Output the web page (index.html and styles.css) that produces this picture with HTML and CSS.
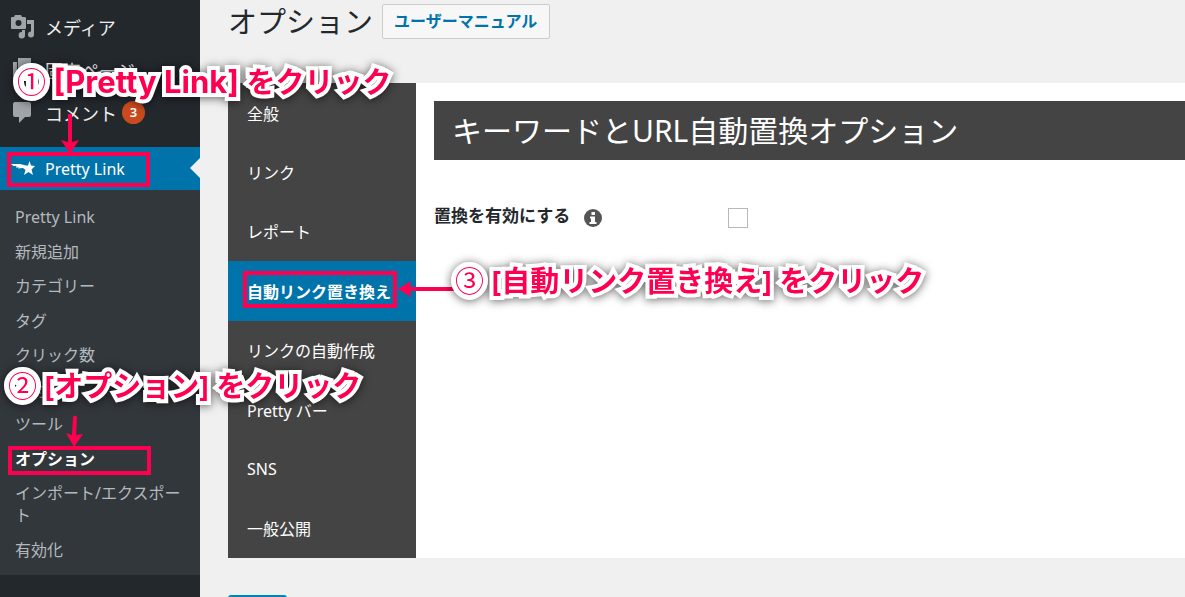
FILE: index.html
```html
<!DOCTYPE html>
<html lang="ja">
<head>
  <meta charset="UTF-8">
  <title>オプション</title>
  <link rel="stylesheet" href="styles.css">
</head>
<body>
  <div class="layout">
    <nav class="sidebar">
      <ul class="menu">
        <li>
          <a href="#">
            <svg class="icon" viewBox="0 0 24 24">
              <path fill-rule="evenodd" d="M0 3q0-1 1-1h2l1-2h6l1 2h2q2 0 2 1v10q0 1-1 1H1q-1 0-1-1zM7.500 5a3 3 0 1 0 0 6a3 3 0 1 0 0-6z"/>
              <path d="M16 5h7v14.500a3 3 0 1 1-3-3V9h-4z"/>
              <path d="M11 15h3v5a3.200 3.200 0 1 1-3-3z"/>
            </svg>
            メディア
          </a>
        </li>
        <li>
          <a href="#">
            <svg class="icon" viewBox="0 0 24 24">
              <path d="M7 0h13v17H7z"/>
              <path d="M2 4h4v14h11v3H2z"/>
            </svg>
            固定ページ
          </a>
        </li>
        <li>
          <a href="#">
            <svg class="icon" viewBox="0 0 24 24">
              <path d="M4 1h14q2 0 2 2v11q0 2-2 2h-4l-6 6v-6H4q-2 0-2-2V3q0-2 2-2z"/>
            </svg>
            コメント
            <span class="count">3</span>
          </a>
        </li>
        <li class="current">
          <a href="#">
            <svg class="icon" viewBox="0 0 24 24">
              <path d="M0 7h9l6 1.500h2L18.500 4l1.500 4.500 4 .500-3.500 3.500 1.500 5.500-4.500-3-4.500 3 1.500-5-2.500-2-5 .500 1-1H5l.500-1.500H2.500z"/>
            </svg>
            Pretty Link
          </a>
        </li>
      </ul>
      <ul class="submenu">
        <li><a href="#">Pretty Link</a></li>
        <li><a href="#">新規追加</a></li>
        <li><a href="#">カテゴリー</a></li>
        <li><a href="#">タグ</a></li>
        <li><a href="#">クリック数</a></li>
        <li><a href="#">寄付</a></li>
        <li><a href="#">ツール</a></li>
        <li class="selected"><a href="#">オプション</a></li>
        <li><a href="#">インポート/エクスポート</a></li>
        <li><a href="#">有効化</a></li>
      </ul>
    </nav>

    <main class="content">
      <header class="page-header">
        <h1>オプション</h1>
        <a class="manual" href="#">ユーザーマニュアル</a>
      </header>

      <div class="options">
        <ul class="tabs">
          <li><a href="#">全般</a></li>
          <li><a href="#">リンク</a></li>
          <li><a href="#">レポート</a></li>
          <li class="active"><a href="#">自動リンク置き換え</a></li>
          <li><a href="#">リンクの自動作成</a></li>
          <li><a href="#">Pretty バー</a></li>
          <li><a href="#">SNS</a></li>
          <li><a href="#">一般公開</a></li>
        </ul>
        <section class="panel">
          <h2>キーワードとURL自動置換オプション</h2>
          <div class="field">
            <div class="field-name">
              <label for="replace">置換を有効にする</label>
              <svg class="info" viewBox="0 0 18 18">
                <circle cx="9" cy="9" r="9"/>
                <path d="M7.500 3h3.500v3H7.500zM6 7.500h5v5.500h1.500v2H5.500v-2H7V9.500H6z"/>
              </svg>
            </div>
            <input type="checkbox" id="replace">
          </div>
        </section>
      </div>

      <button class="save" type="submit" aria-label="更新"></button>
    </main>
  </div>

  <!-- steps -->
  <div class="box box-link"></div>
  <div class="box box-option"></div>
  <div class="box box-tab"></div>
  <svg class="arrow arrow-link" viewBox="0 0 18 40"><path d="M7 0h4v28l7-2-9 14-9-14 7 2z"/></svg>
  <svg class="arrow arrow-option" viewBox="0 0 18 32"><path d="M7 2q2-3 4 0l-1 18 7-1-9 13-8-14 6 2z"/></svg>
  <svg class="arrow arrow-tab" viewBox="0 0 56 18"><path d="M0 9l13-8-1 6h44v4H12l1 6z"/></svg>
  <p class="step step-link"><span class="num">①</span> <span class="latin">[Pretty Link]</span> をクリック</p>
  <p class="step step-option"><span class="num">②</span> [オプション] をクリック</p>
  <p class="step step-tab"><span class="num">③</span> [自動リンク置き換え] をクリック</p>
</body>
</html>
```
FILE: styles.css
```css
* {
  box-sizing: border-box;
}

body {
  position: relative;
  margin: 0;
  height: 100vh;
  overflow: hidden;
  background: #f0f0f0;
  color: #23282d;
  font-family: "Noto Sans", "Noto Sans CJK JP", sans-serif;
  font-size: 16px;
}

ul {
  list-style: none;
  margin: 0;
  padding: 0;
}

a {
  text-decoration: none;
}

.layout {
  display: flex;
  min-height: 100vh;
}

/* sidebar */
.sidebar {
  flex: 0 0 200px;
  padding-top: 5px;
  background: #23282d;
}

.menu a {
  display: flex;
  align-items: center;
  gap: 10px;
  height: 43px;
  padding-left: 11px;
  color: #eee;
  font-size: 18px;
}

.icon {
  width: 24px;
  height: 24px;
  fill: #a0a5aa;
}

.count {
  width: 23px;
  margin-left: -5px;
  border-radius: 50%;
  background: #ca4a1f;
  color: #fff;
  font-size: 13px;
  font-weight: 600;
  line-height: 23px;
  text-align: center;
}

.menu .current {
  position: relative;
  margin-top: 13px;
  background: #0073aa;
}

.current a {
  color: #fff;
  font-size: 16px;
}

.current .icon {
  fill: #fff;
}

.current::after {
  content: "";
  position: absolute;
  top: 11px;
  right: 0;
  border: 10px solid transparent;
  border-left: 0;
  border-right-color: #f0f0f0;
}

.submenu {
  display: flex;
  flex-direction: column;
  justify-content: space-between;
  min-height: 385px;
  padding: 10px 14px 8px 15px;
  background: #32373c;
  line-height: 22px;
}

.submenu a {
  display: block;
  padding: 6px 0;
  color: #b4b9be;
}

.submenu .selected a {
  color: #fff;
  font-weight: 700;
}

/* content */
.content {
  flex: 1;
  min-width: 0;
  padding-left: 28px;
}

.page-header {
  display: flex;
  align-items: center;
  gap: 9px;
  height: 43px;
  margin-bottom: 40px;
}

h1 {
  margin: 0;
  font-size: 29px;
  font-weight: 400;
  line-height: 40px;
}

.manual {
  padding: 0 12px 0 11px;
  border: 1px solid #ccc;
  border-radius: 2px;
  background: #f7f7f7;
  color: #0073aa;
  font-weight: 700;
  line-height: 33px;
}

.options {
  display: flex;
  min-height: 475px;
  background: #fff;
}

.tabs {
  display: flex;
  flex: 0 0 188px;
  flex-direction: column;
  background: #444;
}

.tabs li {
  display: flex;
  flex: 1;
  align-items: center;
  padding-left: 19px;
}

.tabs a {
  color: #fff;
}

.tabs .active {
  background: #0073aa;
  font-weight: 700;
}

.panel {
  flex: 1;
  padding: 18px 0 0 18px;
}

h2 {
  margin: 0;
  padding: 0 18px;
  background: #444;
  color: #fff;
  font-size: 30px;
  font-weight: 400;
  line-height: 59px;
}

.field {
  display: flex;
  align-items: center;
  margin-top: 42px;
}

.field-name {
  display: flex;
  flex: 0 0 294px;
  align-items: center;
  gap: 14px;
  font-size: 17px;
  font-weight: 700;
}

.field-name label {
  padding-bottom: 6px;
}

.info {
  width: 18px;
  height: 18px;
  fill: #555;
}

.info path {
  fill: #fff;
}

.field input {
  appearance: none;
  width: 20px;
  height: 20px;
  margin: 0;
  border: 1px solid #b4b9be;
  background: #fff;
}

.save {
  display: block;
  width: 59px;
  height: 34px;
  margin-top: 37px;
  border: 0;
  border-radius: 3px;
  background: #0085ba;
}

/* steps drawn over the page */
.box,
.arrow,
.step {
  position: absolute;
}

.box {
  border: 4px solid #ff0050;
}

.box-link {
  left: 7px;
  top: 152px;
  width: 143px;
  height: 35px;
}

.box-option {
  left: 8px;
  top: 446px;
  width: 143px;
  height: 29px;
}

.box-tab {
  left: 243px;
  top: 271px;
  width: 154px;
  height: 37px;
}

.arrow {
  fill: #ff0050;
}

.arrow-link {
  left: 61px;
  top: 114px;
  width: 18px;
  height: 40px;
}

.arrow-option {
  left: 66px;
  top: 415px;
  width: 18px;
  height: 32px;
}

.arrow-tab {
  left: 398px;
  top: 280px;
  width: 56px;
  height: 18px;
}

.step {
  margin: 0;
  color: #ff0050;
  font-size: 29px;
  font-weight: 700;
  line-height: 40px;
  white-space: nowrap;
  -webkit-text-stroke: 8px #fff;
  stroke-linejoin: round;
  paint-order: stroke fill;
  filter: drop-shadow(0 1px 5px rgba(0, 0, 0, 0.6));
}

.num {
  font-family: "Noto Sans CJK JP", sans-serif;
  font-weight: 400;
  -webkit-text-stroke-width: 10px;
}

.latin {
  font-family: Inter, sans-serif;
  font-size: 31px;
}

.step-link {
  left: 17px;
  top: 60px;
}

.step-option {
  left: 8px;
  top: 364px;
}

.step-tab {
  left: 455px;
  top: 259px;
}
```
